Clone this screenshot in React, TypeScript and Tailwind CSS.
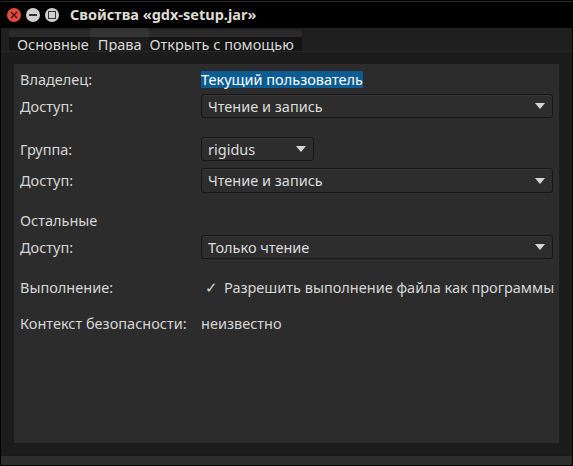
import React from "react";

const font = { fontFamily: '"Noto Sans", "Open Sans", sans-serif' };

function Arrow() {
  return (
    <svg width="10" height="6" viewBox="0 0 10 6" className="shrink-0">
      <path d="M0 0 L10 0 L5 6 Z" fill="#d6d6d6" />
    </svg>
  );
}

function Combo({ text, className }: { text: string; className: string }) {
  return (
    <div
      className={`flex items-center justify-between rounded-[3px] border border-[#161616] bg-[#2d2d2d] pl-[6px] pr-[7px] shadow-[inset_0_1px_0_#363636] ${className}`}
    >
      <span className="whitespace-nowrap text-[14.5px] leading-none text-[#dcdcdc]">{text}</span>
      <Arrow />
    </div>
  );
}

function Label({ children }: { children: React.ReactNode }) {
  return (
    <div className="w-[181px] shrink-0 whitespace-nowrap text-[14.5px] leading-none text-[#d6d6d6]">{children}</div>
  );
}

export default function App() {
  return (
    <div className="w-[573px] h-[466px] bg-black p-[1px]" style={font}>
      <div className="flex h-full flex-col bg-[#1d1d1d]">
        {/* Title bar */}
        <div className="flex h-[27px] items-center bg-black border-t border-[#2a2a2a] pl-[6px]">
          <div className="flex items-center gap-[5px]">
            <div className="flex h-[14px] w-[14px] items-center justify-center rounded-full bg-[#e04a3f]">
              <svg width="8" height="8" viewBox="0 0 8 8">
                <path d="M1 1 L7 7 M7 1 L1 7" stroke="#3a1010" strokeWidth="1.3" />
              </svg>
            </div>
            <div className="flex h-[14px] w-[14px] items-center justify-center rounded-full bg-[#cfcfcf]">
              <div className="h-[2px] w-[8px] bg-[#333]" />
            </div>
            <div className="flex h-[14px] w-[14px] items-center justify-center rounded-full bg-[#cfcfcf]">
              <div className="h-[8px] w-[8px] border-[1.5px] border-[#333]" />
            </div>
          </div>
          <div className="ml-[11px] whitespace-nowrap text-[14.5px] font-bold text-[#dfdbd2]">
            Свойства «gdx-setup.jar»
          </div>
        </div>

        {/* Tabs */}
        <div className="flex h-[24px] border-b border-[#262626] bg-[#1f1f1f] pl-[8px]">
          <div className="flex flex-col pt-[2px]">
            <div className="h-[7px] rounded-tl-[2px] bg-[#2a2a2a]" />
            <div className="flex h-[15px] items-center whitespace-nowrap bg-[#141414] pl-[8px] pr-[1px] text-[14.5px] leading-none text-[#d8d8d8]">
              Основные
            </div>
          </div>
          <div className="flex flex-col">
            <div className="h-[9px] rounded-t-[3px] bg-[#333333]" />
            <div className="flex h-[15px] items-center whitespace-nowrap bg-[#1d1d1d] pl-[8px] pr-[7px] text-[14.5px] leading-none text-[#d8d8d8]">
              Права
            </div>
          </div>
          <div className="flex flex-col pt-[2px]">
            <div className="h-[7px] rounded-tr-[3px] bg-[#2a2a2a]" />
            <div className="flex h-[15px] items-center whitespace-nowrap bg-[#141414] pl-[1px] pr-[8px] text-[14.5px] leading-none text-[#d8d8d8]">
              Открыть с помощью
            </div>
          </div>
        </div>

        {/* Content */}
        <div className="flex-1 bg-[#1c1c1c] pl-[13px] pr-[13px] pt-[12px] pb-[12px]">
          <div className="flex h-full flex-col bg-[#2c2c2c] pl-[6px] pr-[6px] pt-[6px]">
            <div className="flex h-[18px] items-center">
              <Label>Владелец:</Label>
              <span className="flex h-[17px] items-center whitespace-nowrap bg-[#0a5c92] text-[14.5px] leading-none text-white">
                Текущий пользователь
              </span>
            </div>
            <div className="mt-[6px] flex h-[24px] items-center">
              <Label>Доступ:</Label>
              <Combo text="Чтение и запись" className="h-[24px] flex-1" />
            </div>
            <div className="mt-[19px] flex h-[24px] items-center">
              <Label>Группа:</Label>
              <Combo text="rigidus" className="h-[24px] w-[113px]" />
            </div>
            <div className="mt-[7px] flex h-[25px] items-center">
              <Label>Доступ:</Label>
              <Combo text="Чтение и запись" className="h-[25px] flex-1" />
            </div>
            <div className="mt-[15px] flex h-[24px] items-center">
              <Label>Остальные</Label>
            </div>
            <div className="mt-[3px] flex h-[24px] items-center">
              <Label>Доступ:</Label>
              <Combo text="Только чтение" className="h-[24px] flex-1" />
            </div>
            <div className="mt-[16px] flex h-[24px] items-center">
              <Label>Выполнение:</Label>
              <span className="ml-[4px] w-[19px] shrink-0 text-[14.5px] leading-none text-[#d6d6d6]">✓</span>
              <span className="whitespace-nowrap text-[14.5px] leading-none text-[#d6d6d6]">
                Разрешить выполнение файла как программы
              </span>
            </div>
            <div className="mt-[12px] flex h-[24px] items-center">
              <Label>Контекст безопасности:</Label>
              <span className="whitespace-nowrap text-[14.5px] leading-none text-[#d6d6d6]">неизвестно</span>
            </div>
          </div>
        </div>
        <div className="h-[10px] border-t border-[#191919] bg-[#2d2d2d]" />
      </div>
    </div>
  );
}
